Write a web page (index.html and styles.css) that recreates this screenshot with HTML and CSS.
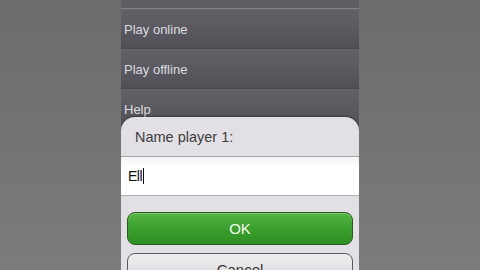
FILE: index.html
```html
<!DOCTYPE html>
<html>
<head>
<meta charset="utf-8">
<link rel="stylesheet" href="styles.css">
</head>
<body>
<div class="stage">
  <div class="screen">
    <div class="header"></div>
    <div class="menu">
      <div class="row">Play online</div>
      <div class="row">Play offline</div>
      <div class="row">Help</div>
    </div>
    <div class="dialog">
      <div class="title">Name player 1:</div>
      <div class="input"><span class="value">Ell</span><span class="caret"></span></div>
      <div class="actions">
        <div class="btn ok">OK</div>
        <div class="btn cancel">Cancel</div>
      </div>
    </div>
  </div>
</div>
</body>
</html>
```
FILE: styles.css
```css
html, body {
  margin: 0;
  padding: 0;
}
body {
  width: 480px;
  height: 270px;
  overflow: hidden;
  background: linear-gradient(#6c6c6c, #7b7b7b);
  font-family: "Liberation Sans", Arial, sans-serif;
}
.stage {
  display: flex;
  justify-content: center;
  height: 270px;
}
.screen {
  position: relative;
  width: 238px;
  height: 270px;
  background: #4e4e54;
  overflow: hidden;
}
.header {
  height: 8px;
  background: #5e5e63;
  border-bottom: 1px solid #828288;
}
.row {
  height: 40px;
  box-sizing: border-box;
  padding-left: 3px;
  display: flex;
  align-items: center;
  color: #dcdce0;
  font-size: 13px;
  background: linear-gradient(#606066 0%, #5a5a60 45%, #505056 100%);
  border-top: 1px solid #66666c;
  border-bottom: 1px solid #48484d;
}
.dialog {
  position: absolute;
  left: 0;
  right: 0;
  top: 117px;
  bottom: 0;
  background: #e3e0e5;
  border-radius: 14px 14px 0 0;
  box-shadow: 0 -1px 2px rgba(0,0,0,0.35);
}
.title {
  height: 40px;
  box-sizing: border-box;
  padding-left: 14px;
  display: flex;
  align-items: center;
  font-size: 14.5px;
  color: #3c3c3c;
  border-bottom: 1px solid #a6a4a8;
}
.input {
  height: 39px;
  box-sizing: border-box;
  background: linear-gradient(#f3f3f3, #ffffff 30%);
  border-bottom: 1px solid #b3b1b5;
  display: flex;
  align-items: center;
  padding-left: 7px;
  font-size: 14px;
  color: #111;
}
.value {
  letter-spacing: -0.5px;
}
.caret {
  width: 1px;
  height: 16px;
  background: #111;
  margin-left: 1px;
}
.actions {
  padding: 16px 6px 0;
  display: flex;
  flex-direction: column;
  gap: 8px;
}
.btn {
  height: 33px;
  box-sizing: border-box;
  border-radius: 8px;
  display: flex;
  align-items: center;
  justify-content: center;
  font-size: 15px;
}
.ok {
  color: #f4fff0;
  background: linear-gradient(#56b646, #3a9e2c 50%, #2f8f22);
  border: 1px solid #2b5a22;
  box-shadow: inset 0 1px 0 rgba(255,255,255,0.25);
}
.cancel {
  color: #333;
  background: linear-gradient(#efedf0, #d9d7db);
  border: 1px solid #5a5a5e;
}
```
